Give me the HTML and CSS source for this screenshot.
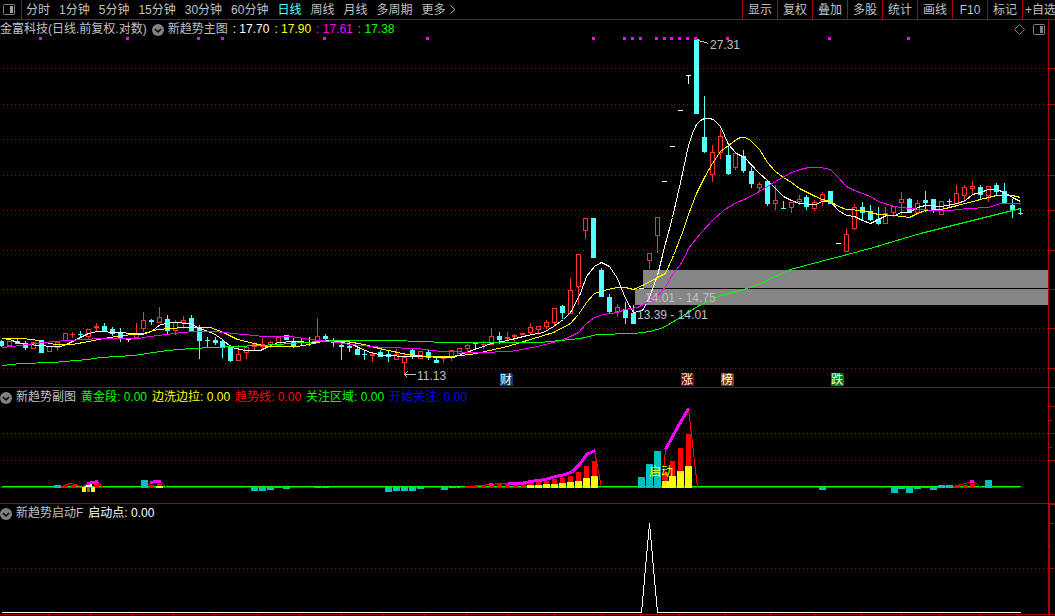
FILE: index.html
```html
<!DOCTYPE html>
<html lang="zh-CN">

<head>
  <title>金富科技 日线</title>
  <meta charset="UTF-8">
  <meta name="viewport" content="width=device-width, initial-scale=1">
  <link rel="stylesheet" href="styles.css">
</head>

<body>
  <header class="toolbar">
    <button class="sideButton" aria-label="侧栏">
      <svg width="13" height="11" viewBox="0 0 13 11">
        <rect x="0.5" y="0.5" width="11" height="10" rx="1" fill="none" stroke="#808080" />
        <rect x="7" y="2" width="3" height="7" fill="#a0a0a0" />
      </svg>
    </button>
    <nav class="periods">
      <button>分时</button>
      <button>1分钟</button>
      <button>5分钟</button>
      <button>15分钟</button>
      <button>30分钟</button>
      <button>60分钟</button>
      <button class="active">日线</button>
      <button>周线</button>
      <button>月线</button>
      <button>多周期</button>
      <button class="more">更多
        <svg width="6" height="9" viewBox="0 0 6 9"><path d="M0.5 0.5L5 4.5L0.5 8.5" fill="none" stroke="#c0c0c0" /></svg>
      </button>
    </nav>
    <div class="tools">
      <button>显示</button>
      <button>复权</button>
      <button>叠加</button>
      <button>多股</button>
      <button>统计</button>
      <button>画线</button>
      <button>F10</button>
      <button>标记</button>
      <button class="add">+自选</button>
    </div>
  </header>

  <main>
    <section class="panel">
      <div class="plot">
        <div class="legend">
          <span>金富科技(日线.前复权.对数)</span>
          <button class="fold" aria-label="主图指标"><svg width="12" height="12" viewBox="0 0 12 12"><circle cx="6" cy="6" r="6" fill="#808080" /><path d="M3 5L6 8L9 5" fill="none" stroke="#000" stroke-width="1.5" /></svg></button>
          <span>新趋势主图</span>
          <span class="white">: 17.70</span>
          <span class="yellow">: 17.90</span>
          <span class="magenta">: 17.61</span>
          <span class="green">: 17.38</span>
          <div class="corner">
            <button aria-label="标记"><svg width="11" height="11" viewBox="0 0 11 11"><path d="M5.5 0.5L10.5 5.5L5.5 10.5L0.5 5.5Z" fill="none" stroke="#808080" /></svg></button>
            <button aria-label="右侧栏"><svg width="12" height="11" viewBox="0 0 12 11"><rect x="0.5" y="0.5" width="11" height="10" rx="1" fill="none" stroke="#808080" /><rect x="7" y="2" width="3" height="7" fill="#808080" /></svg></button>
          </div>
        </div>
        <svg class="chart" id="main" height="350"></svg>
      </div>
      <svg class="axis" id="mainAxis" height="367"></svg>
    </section>

    <section class="panel">
      <div class="plot">
        <div class="legend">
          <button class="fold" aria-label="副图指标"><svg width="12" height="12" viewBox="0 0 12 12"><circle cx="6" cy="6" r="6" fill="#808080" /><path d="M3 5L6 8L9 5" fill="none" stroke="#000" stroke-width="1.5" /></svg></button>
          <span>新趋势副图</span>
          <span class="green">黄金段: 0.00</span>
          <span class="yellow">边洗边拉: 0.00</span>
          <span class="red">趋势线: 0.00</span>
          <span class="green">关注区域: 0.00</span>
          <span class="blue">开始关注: 0.00</span>
        </div>
        <svg class="chart" id="sub" height="98"></svg>
      </div>
      <svg class="axis" id="subAxis" height="115"></svg>
    </section>

    <section class="panel last">
      <div class="plot">
        <div class="legend">
          <button class="fold" aria-label="启动指标"><svg width="12" height="12" viewBox="0 0 12 12"><circle cx="6" cy="6" r="6" fill="#808080" /><path d="M3 5L6 8L9 5" fill="none" stroke="#000" stroke-width="1.5" /></svg></button>
          <span>新趋势启动F</span>
          <span class="white">启动点: 0.00</span>
        </div>
        <svg class="chart" id="start" height="93"></svg>
      </div>
      <svg class="axis" id="startAxis" height="110"></svg>
    </section>
    <svg class="timeline" id="timeline" height="1"></svg>
  </main>
  <script src="chart.js"></script>
</body>

</html>
```
FILE: styles.css
```css
body {
  margin: 0;
  background: #000;
  color: #c0c0c0;
  font-family: "Liberation Sans", "Noto Sans CJK SC", sans-serif;
  font-size: 12px;
}

button {
  margin: 0;
  padding: 0;
  border: 0;
  background: none;
  color: inherit;
  font: inherit;
  white-space: nowrap;
  cursor: pointer;
}

svg {
  display: block;
}

/* toolbar */
.toolbar {
  display: flex;
  height: 19px;
  line-height: 18px;
  border-bottom: 1px solid #b40000;
}

.sideButton {
  padding: 0 5px 0 3px;
  border-right: 1px solid #b40000;
}

.periods {
  display: flex;
  flex: 1;
  gap: 9px;
  padding-left: 4px;
  overflow: hidden;
}

.periods .active {
  color: #54ffff;
}

.more {
  display: flex;
  align-items: center;
  gap: 4px;
}

.tools {
  display: flex;
}

.tools button {
  width: 35px;
  box-sizing: border-box;
  border-left: 1px solid #b40000;
}

.tools .add {
  width: 33px;
  padding-left: 2px;
  text-align: left;
  overflow: hidden;
}

/* panels */
.panel {
  display: flex;
  border-bottom: 1px solid #b40000;
}

.plot {
  flex: 1;
  min-width: 0;
}

.legend {
  display: flex;
  align-items: center;
  gap: 5px;
  height: 15px;
  padding-top: 2px;
  line-height: 15px;
  white-space: nowrap;
}

.fold + span {
  margin-left: -1px;
}

.corner {
  display: flex;
  gap: 8px;
  margin-left: auto;
  padding-right: 3px;
}

.chart,
.timeline {
  width: 100%;
}

.axis {
  width: 7px;
  box-sizing: border-box;
  border-left: 1px solid #b40000;
}

.last .axis {
  border-left-width: 2px;
  border-top: 1px solid #b40000;
}

.white { color: #fff; }
.yellow { color: #ff0; }
.magenta { color: #f0f; }
.green { color: #0f0; }
.red { color: #f00; }
.blue { color: #00f; }

/* drawings */
.chart g {
  shape-rendering: crispEdges;
}

.chart text {
  fill: #c0c0c0;
}

.chart .grid {
  stroke: #b40000;
  stroke-dasharray: 1 3;
}

.chart .badge {
  fill: #fff;
}

.chart .signal {
  fill: #ff0;
}
```
FILE: chart.js
```js
const NS = "http://www.w3.org/2000/svg";
const RED = "#ff3232";
const CYAN = "#54ffff";
const BAR = "#00c0c0";
const LINE = "#b40000";

function add(parent, name, attrs, text) {
  const el = document.createElementNS(NS, name);
  for (const key in attrs) el.setAttribute(key, attrs[key]);
  if (text) el.textContent = text;
  parent.appendChild(el);
  return el;
}

// every chart uses window coordinates, moved up by its own top
function layer(id, top) {
  return add(document.getElementById(id), "g", { transform: "translate(0,-" + top + ")" });
}

function rect(g, x, y, w, h, fill) {
  return add(g, "rect", { x: x, y: y, width: w, height: h, fill: fill });
}

function line(g, points, color, width) {
  const pts = points.split(" ").map(p => p.split(",").map(n => +n + 0.5).join(",")).join(" ");
  add(g, "polyline", { points: pts, fill: "none", stroke: color, "stroke-width": width || 1 });
}

function grid(g, rows) {
  rows.forEach(y => add(g, "line", { class: "grid", x1: 3, x2: "100%", y1: y + 0.5, y2: y + 0.5 }));
}

function ticks(id, top, rows, w) {
  const g = layer(id, top);
  rows.forEach(y => rect(g, 0, y, w, 1, LINE));
}

// type, high, body top, body bottom, low
const candles = [
  ["c",340,341,345,346],["r",341,341,345,346],["c",339,341,343,343],["c",341,343,347,349],["r",342,342,348,348],
  ["c",340,340,352,352],["r",346,346,351,351],["r",342,342,347,350],["r",333,333,340,340],["r",332,334,334,337],
  ["c",331,334,334,336],["r",329,329,336,338],["r",323,326,327,331],["c",323,326,330,330],["c",327,329,333,335],
  ["c",328,333,338,341],["w",338,339,339,341],["r",323,333,337,338],["r",312,320,328,331],["c",319,320,321,324],
  ["r",307,317,322,322],["c",315,319,330,334],["r",320,322,330,334],["r",316,320,322,327],["c",315,318,330,331],
  ["c",325,328,340,358],["c",337,340,340,347],["c",337,340,342,344],["c",340,341,347,357],["c",345,347,360,361],
  ["r",345,354,360,360],["r",346,347,352,358],["r",342,344,346,350],["r",338,344,346,349],["r",341,342,344,347],
  ["r",337,337,345,345],["c",335,335,339,339],["c",338,342,345,347],["c",339,342,342,344],["w",337,342,342,345],
  ["r",318,336,341,341],["c",334,336,338,341],["c",338,340,342,346],["c",342,345,346,359],["c",342,346,347,351],
  ["c",345,349,354,354],["c",350,354,354,359],["r",352,354,355,361],["c",350,352,356,356],["c",351,354,356,361],
  ["r",349,354,359,359],["r",353,357,362,374],["c",348,350,355,358],["r",351,351,358,358],["c",350,352,357,359],
  ["c",358,360,362,362],["r",357,358,358,362],["r",350,350,357,360],["r",348,348,353,353],["r",344,345,348,351],
  ["c",342,343,343,348],["r",341,344,344,348],["r",328,336,344,344],["c",332,336,339,343],["r",332,337,338,342],
  ["r",334,335,336,341],["r",333,333,334,334],["r",323,327,332,334],["r",326,326,329,332],["r",320,322,326,328],
  ["r",308,308,322,325],["c",305,306,312,318],["r",278,290,313,313],["r",254,254,286,304],["r",218,218,230,238],
  ["c",218,218,257,257],["c",268,270,296,296],["c",294,297,311,313],["r",304,307,311,316],["c",302,309,317,323],
  ["c",305,313,323,323],["w",288,288,288,288],["r",253,253,260,268],["r",217,217,235,252],["w",181,181,181,181],
  ["w",146,146,146,146],["w",110,110,110,110],["w",75,75,75,83],["c",39,39,113,113],["c",96,137,151,152],
  ["r",145,152,174,181],["r",130,136,152,158],["c",144,155,173,174],["r",153,153,167,169],["c",150,156,170,172],
  ["c",167,171,183,187],["r",182,184,187,191],["c",181,181,203,205],["r",185,200,203,209],["c",201,208,208,208],
  ["r",202,202,207,212],["r",195,199,201,204],["c",195,197,206,209],["r",200,202,208,210],["r",192,194,200,205],
  ["c",191,191,203,203],["w",243,243,243,243],["r",229,234,251,251],["r",204,207,228,229],["c",202,207,212,219],
  ["c",205,211,219,220],["c",207,219,223,224],["r",207,213,223,223],["r",206,206,212,216],["r",192,199,202,214],
  ["c",198,199,212,212],["r",200,203,212,213],["c",191,200,202,211],["c",199,199,209,212],["r",201,201,214,214],
  ["c",199,201,201,207],["r",185,193,203,203],["r",185,187,195,201],["r",181,186,188,193],["c",185,187,194,199],
  ["r",186,186,195,201],["c",183,185,191,195],["c",183,191,203,203],["c",199,205,209,217],["c",208,213,213,214]
];

const white = "2,338 9,339 17,342 26,344 40,345 50,346 60,346 68,343 78,338 88,333 97,331 118,332 132,333 142,334 151,331 160,324 173,322 190,323 199,328 213,333 222,339 231,347 245,350 260,350 268,346 278,342 293,341 313,342 330,340 342,342 352,344 360,348 370,352 383,355 410,356 428,356 437,357 453,357 463,353 480,347 491,343 507,340 527,335 543,332 553,326 563,319 570,312 580,293 586,276 594,266 601,262 609,266 617,278 625,298 633,312 642,310 649,297 657,275 665,243 672,217 680,182 688,145 692,133 696,124 700,120 704,118 709,118 713,119 720,126 728,144 736,153 744,157 759,173 767,180 775,188 783,196 791,200 799,203 815,204 822,201 830,201 838,210 846,215 854,216 862,220 870,223 878,219 886,215 894,215 901,212 909,212 917,207 925,205 941,206 957,203 965,200 972,194 980,192 988,189 996,189 1004,192 1012,197 1020,201";
const yellow = "2,338 20,338 33,339 40,341 55,344 72,344 88,341 103,338 123,335 143,333 157,329 183,327 210,327 223,332 237,339 258,344 267,346 297,346 308,344 322,341 347,341 363,344 383,349 407,354 427,356 450,356 470,354 480,352 507,346 530,339 553,332 570,323 578,314 586,302 594,293 607,289 617,287 625,287 633,289 642,285 657,277 665,273 673,255 682,232 688,214 696,193 704,177 712,163 720,151 728,145 736,139 740,137 745,137 750,140 759,149 767,162 775,171 783,177 791,182 799,188 815,196 822,199 830,201 838,206 846,209 862,210 878,214 894,215 909,217 917,213 925,210 941,209 957,205 980,199 996,195 1012,195 1020,197";
const magenta = "2,347 20,345 43,342 67,340 100,338 137,338 150,336 173,333 193,331 213,331 233,333 263,336 290,336 310,339 330,341 350,344 383,347 417,348 440,351 480,352 510,351 537,346 560,340 570,336 578,332 586,323 594,317 603,314 617,312 625,309 637,307 647,302 657,296 665,286 673,273 682,261 688,248 700,233 713,219 723,210 736,202 744,199 759,191 775,181 791,172 800,169 808,167 820,167 830,169 838,177 846,186 854,190 870,196 878,201 894,206 909,208 933,210 949,210 967,208 988,207 1000,203 1020,203";
const green = "2,365 20,363 53,362 87,359 100,357 133,355 167,350 190,348 213,347 258,345 277,344 303,342 337,340 390,340 423,341 443,342 480,342 540,342 560,340 580,338 597,334 633,333 650,331 663,327 680,317 697,306 720,295 740,290 758,284 790,269 820,261 847,254 873,247 893,241 920,233 940,228 960,223 980,218 1000,213 1020,208";

const main = layer("main", 37);
const mainRows = [68, 104, 139, 175, 210, 250, 289, 328, 368];
grid(main, mainRows);
ticks("mainAxis", 20, mainRows, 6);

// price gaps
rect(main, 643, 270, "100%", 18, "#868686");
rect(main, 635, 289, "100%", 16, "#868686");

candles.forEach(([type, high, top, bottom, low], i) => {
  const x = Math.floor(1.9 + 7.893 * i);
  const color = { r: RED, c: CYAN, w: "#fff" }[type];
  const h = bottom - top + 1;
  if (type == "r" && h > 2) {
    rect(main, x, high, 1, top - high, color);
    rect(main, x, bottom + 1, 1, low - bottom, color);
    add(main, "rect", { x: x - 1.5, y: top + 0.5, width: 4, height: h - 1, fill: "none", stroke: color });
  } else {
    rect(main, x, high, 1, low - high + 1, color);
    rect(main, x - 2, top, 5, h, color);
  }
});

line(main, white, "#fff");
line(main, yellow, "#ff0");
line(main, magenta, "#f0f");
line(main, green, "#0f0");

[40, 127, 198, 222, 324, 427, 593, 624, 632, 640, 656, 664, 671, 679, 687, 695, 727, 829, 908]
  .forEach(x => rect(main, x - 1, 37, 3, 3, "#f0f"));

line(main, "697,40 702,41 708,43", "#c0c0c0");
add(main, "text", { x: 710, y: 49 }, "27.31");
line(main, "415,374 404,374", "#c0c0c0");
line(main, "407,371 404,374 407,377", "#c0c0c0");
add(main, "text", { x: 417, y: 380 }, "11.13");
add(main, "text", { x: 645, y: 302 }, "14.01 - 14.75");
add(main, "text", { x: 637, y: 319 }, "13.39 - 14.01");

[[500, "财", "#003c78"], [681, "涨", "#800000"], [721, "榜", "#804000"], [831, "跌", "#008000"]].forEach(([x, name, color]) => {
  add(main, "path", { d: "M" + x + " 373h11l2 2v11h-13z", fill: color });
  add(main, "text", { class: "badge", x: x, y: 384 }, name);
});

// trend panel
const sub = layer("sub", 405);
grid(sub, [433, 460]);
ticks("subAxis", 388, [406, 433, 460], 6);
ticks("subAxis", 388, [420, 447], 3);
rect(sub, 2, 486, 1019, 1, "#0f0");
rect(sub, 1, 487, 1019, 1, "#f00");

// x, y, height
[[54,485,3],[141,480,8],[251,487,4],[259,487,4],[267,487,3],[275,487,1],[283,487,2],[314,487,1],[322,487,1],
 [385,487,5],[393,487,4],[401,487,4],[409,487,4],[417,487,2],[441,487,3],[449,487,1],[457,487,1],
 [638,477,11],[646,464,24],[654,451,37],[819,487,3],[891,487,6],[898,487,2],[906,487,6],[914,487,2],[922,487,1],
 [930,487,3],[938,485,3],[946,485,3],[985,480,8]].forEach(([x, y, h]) => rect(sub, x, y, 7, h, BAR));

// x, top
[[63,486],[71,485],[94,484],[149,485],[157,484],[465,486],[473,486],[481,485],[489,485],[497,484],[505,484],[513,484],
 [521,484],[528,482],[536,482],[544,481],[552,479],[560,478],[568,476],[576,472],[584,466],[592,461],
 [663,472],[670,461],[678,448],[686,434],[955,485],[963,485],[970,484]].forEach(([x, y]) => rect(sub, x, y, 5, 488 - y, "#f00"));

[[156,486],[527,485],[535,485],[543,484],[551,484],[559,483],[567,482],[575,481],[583,478],[591,476],
 [662,481],[669,476],[677,471],[685,466]].forEach(([x, y]) => rect(sub, x, y, 7, 488 - y, "#ff0"));

rect(sub, 82, 487, 4, 5, "#ff0");
rect(sub, 87, 487, 3, 5, "#808000");
rect(sub, 91, 487, 4, 5, "#ff0");
rect(sub, 85, 484, 7, 3, "#fff");

line(sub, "61,486 66,484 70,483 75,484 79,486", "#f00");
line(sub, "82,486 88,483 98,483 103,487", "#f00");
line(sub, "148,484 151,482 160,481 166,487", "#f00");
line(sub, "460,487 480,485 500,483 520,483", "#f00");
line(sub, "594,450 601,487", "#f00");
line(sub, "662,480 665,449", "#f00");
line(sub, "688,408 697,487", "#f00");
line(sub, "953,486 960,484 969,482 975,482 980,487", "#f00");

line(sub, "87,483 92,482 98,481", "#f0f", 3);
line(sub, "150,482 155,481 160,481", "#f0f", 3);
line(sub, "488,484 492,484", "#f0f", 3);
line(sub, "507,483 520,483 530,481 545,479 555,476 565,474 572,471 580,463 586,454 595,450", "#f0f", 3);
line(sub, "665,449 677,427 688,408", "#f0f", 3);
line(sub, "969,481 973,481", "#f0f", 3);
add(sub, "text", { class: "signal", x: 649, y: 476 }, "启动");

// start signal panel
const start = layer("start", 521);
grid(start, [568]);
ticks("startAxis", 505, [523, 568], 4);
ticks("startAxis", 505, [546], 1);
line(start, "1,612 641,612 649,523 657,612 1020,612", "#fff");

const timeline = layer("timeline", 0);
[48, 90, 131, 173, 214, 257, 299, 341, 383, 424, 466, 508, 554, 601, 640, 679, 725, 770, 815, 861, 901, 940, 980, 1018]
  .forEach(x => rect(timeline, x, 0, 1, 1, LINE));
```
